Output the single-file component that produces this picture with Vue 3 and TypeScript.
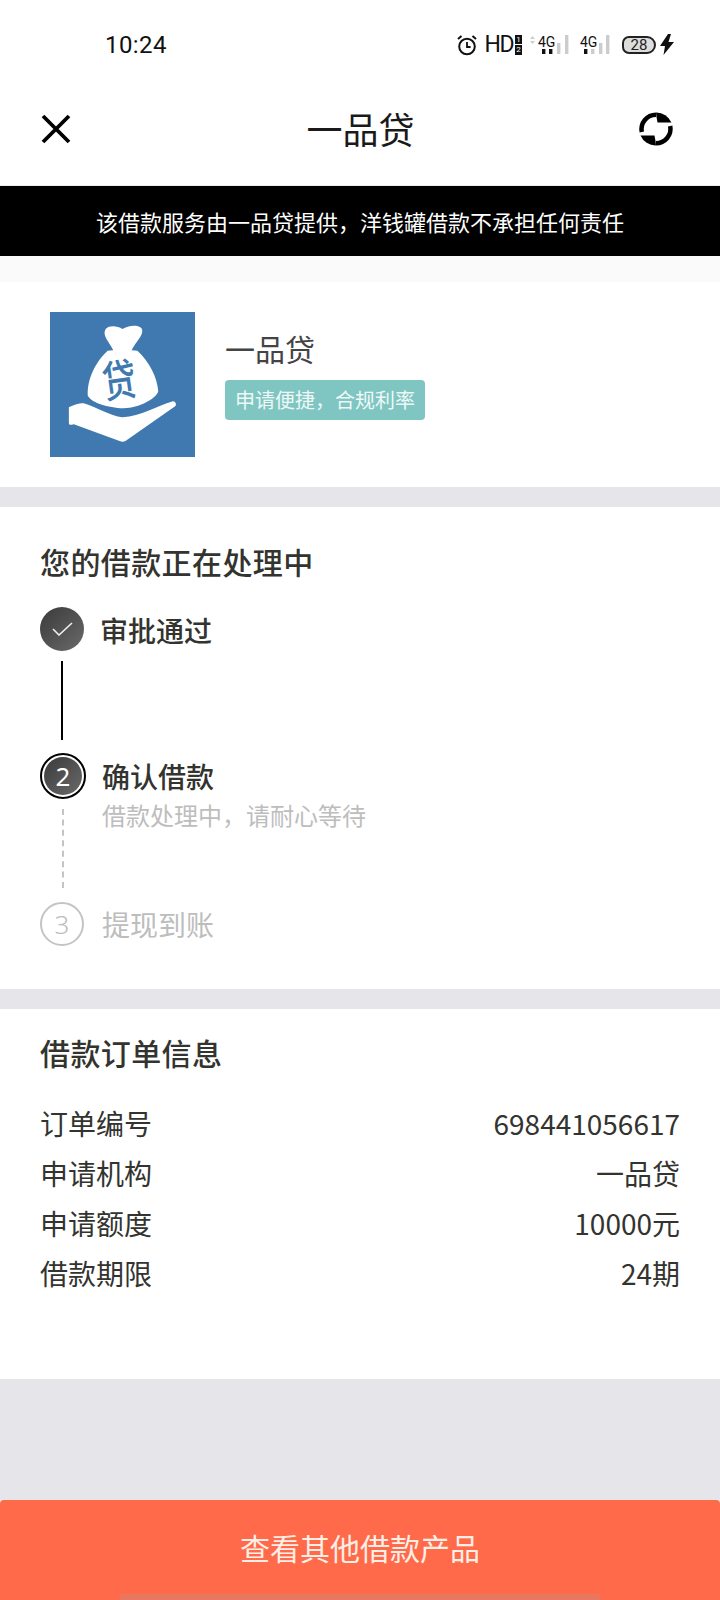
<script setup lang="ts">
type Row = { label: string; value: string }

const rows: Row[] = [
  { label: '订单编号', value: '698441056617' },
  { label: '申请机构', value: '一品贷' },
  { label: '申请额度', value: '10000元' },
  { label: '借款期限', value: '24期' },
]
</script>

<template>
  <div class="page">
    <div class="status">
      <span class="time">10:24</span>
      <div class="status-icons">
        <svg class="alarm" width="22" height="22" viewBox="0 0 22 22" fill="none" stroke="#111" stroke-width="2">
          <circle cx="11" cy="12.5" r="7.8" />
          <path d="M11 8v5h3.600" stroke-width="1.800" />
          <path d="M2 5l3.500-3M20 5l-3.500-3" stroke-width="2" />
        </svg>
        <span class="hd">HD</span>
        <span class="sim"><i>1</i><i>2</i></span>
        <svg class="signal-a" width="40" height="22" viewBox="0 0 40 22">
          <path d="M0 5l2.500-3L5 5zM0 7l2.500 3L5 7z" fill="#ccc" />
          <text x="8" y="13" class="net">4G</text>
          <rect x="12" y="15" width="3.400" height="5" fill="#111" />
          <rect x="19" y="15" width="3.400" height="5" fill="#111" />
          <rect x="27" y="9" width="3.400" height="11" fill="#ccc" />
          <rect x="35" y="1" width="3.400" height="19" fill="#ccc" />
        </svg>
        <svg class="signal-b" width="32" height="22" viewBox="0 0 32 22">
          <text x="0" y="13" class="net">4G</text>
          <rect x="4" y="15" width="3.400" height="5" fill="#111" />
          <rect x="11" y="15" width="3.400" height="5" fill="#ccc" />
          <rect x="19" y="9" width="3.400" height="11" fill="#ccc" />
          <rect x="26" y="1" width="3.400" height="19" fill="#ccc" />
        </svg>
        <span class="battery"><span>28</span></span>
        <svg class="bolt" width="14" height="21" viewBox="0 0 14 21">
          <path d="M8 0L0 12h5l-1.500 9L14 8H8.500L11 0z" fill="#111" />
        </svg>
      </div>
    </div>

    <div class="nav">
      <svg class="close" width="30" height="30" viewBox="0 0 30 30" fill="none" stroke="#000" stroke-width="3.800">
        <path d="M2 2l26 26M28 2L2 28" />
      </svg>
      <span class="nav-title">一品贷</span>
      <svg class="refresh" width="36" height="36" viewBox="0 0 36 36" fill="none" stroke="#000" stroke-width="4.500">
        <path d="M3.800 21A14.500 14.500 0 0 1 18 3.700" />
        <path d="M32.200 15A14.500 14.500 0 0 1 18 32.300" />
        <path d="M18 1.500A16.500 16.500 0 0 1 33.500 11.500H19.500L18.500 6z" fill="#000" stroke="none" />
        <path d="M18 34.500A16.500 16.500 0 0 1 2.500 24.500H16.500L17.500 30z" fill="#000" stroke="none" />
      </svg>
    </div>

    <div class="notice">该借款服务由一品贷提供，洋钱罐借款不承担任何责任</div>
    <div class="spacer"></div>

    <section class="product">
      <svg class="logo" width="145" height="145" viewBox="0 0 146 146">
        <rect width="146" height="146" fill="#3f79b0" />
        <path d="M56 17c4-4 12-3 17 0 5-3 14-5 19-1 4 6-6 14-10 23H64c-4-9-12-15-8-22z" fill="#fff" />
        <path d="M58 39q15-2 30 0c12 11 20 27 21 41-3 8-19 16-35 17-16-1-32-5-36-13-1-16 8-34 20-45z" fill="#fff" />
        <path d="M19 96c4-2 10-5 15-4 14 4 26 13 39 14 18-1 36-12 50-16 3-1 5 3 3 5L76 130c-2 1-4 1-6 0L24 113c-4 1-5 1-5-2z" fill="#fff" />
        <text transform="translate(72 85) rotate(-8) scale(.85 1.1)" text-anchor="middle" class="logo-glyph">贷</text>
      </svg>
      <div class="product-info">
        <div class="product-name">一品贷</div>
        <div class="tag">申请便捷，合规利率</div>
      </div>
    </section>

    <section class="progress">
      <h2 class="heading">您的借款正在处理中</h2>
      <div class="step done">
        <div class="track">
          <span class="dot dark">
            <svg width="21" height="14" viewBox="0 0 21 14" fill="none" stroke="#eee" stroke-width="1.600">
              <path d="M1 7l6 6L20 1" />
            </svg>
          </span>
          <span class="line solid"></span>
        </div>
        <div class="step-title">审批通过</div>
      </div>
      <div class="step current">
        <div class="track">
          <span class="ring"><span class="dot dark small">2</span></span>
          <span class="line dashed"></span>
        </div>
        <div class="step-body">
          <div class="step-title">确认借款</div>
          <div class="step-sub">借款处理中，请耐心等待</div>
        </div>
      </div>
      <div class="step todo">
        <div class="track">
          <span class="dot outline">3</span>
        </div>
        <div class="step-title muted">提现到账</div>
      </div>
    </section>

    <section class="order">
      <h2 class="heading">借款订单信息</h2>
      <div class="rows">
        <div v-for="row in rows" :key="row.label" class="row">
          <span>{{ row.label }}</span>
          <span>{{ row.value }}</span>
        </div>
      </div>
    </section>

    <div class="filler"></div>
    <div class="action">
      查看其他借款产品
      <span class="home-bar"></span>
    </div>
  </div>
</template>

<style>
html,
body {
  margin: 0;
  background: #e6e6ea;
}
</style>

<style scoped>
.page {
  position: relative;
  width: 720px;
  height: 1600px;
  overflow: hidden;
  display: flex;
  flex-direction: column;
  background: #e6e6ea;
  font-family: "Noto Sans CJK SC", "Noto Sans", sans-serif;
  color: #33332f;
}

.status {
  height: 85px;
  box-sizing: border-box;
  padding: 4px 46px 0 105px;
  display: flex;
  align-items: center;
  justify-content: space-between;
  background: #fff;
  color: #111;
}

.time {
  font-family: Roboto, sans-serif;
  font-size: 24px;
  line-height: 28px;
  letter-spacing: 0.4px;
}

.status-icons {
  display: flex;
  align-items: center;
}

.hd {
  margin-left: 6px;
  font-family: Roboto, sans-serif;
  font-size: 23px;
  line-height: 22px;
  letter-spacing: -1.5px;
}

.sim {
  margin-left: 2px;
  width: 7px;
  height: 20px;
  display: flex;
  flex-direction: column;
  gap: 1px;
}

.sim i {
  flex: 1;
  background: #111;
  color: #fff;
  font-family: Roboto, sans-serif;
  font-size: 8px;
  font-style: normal;
  line-height: 9px;
  text-align: center;
}

.signal-a {
  margin-left: 8px;
}

.signal-b {
  margin-left: 10px;
}

.net {
  font-family: Roboto, sans-serif;
  font-size: 14px;
  fill: #111;
}

.battery {
  margin-left: 10px;
  width: 34px;
  height: 18px;
  box-sizing: border-box;
  border: 2px solid #222;
  border-radius: 7px 9px 9px 7px;
  background: #ddd;
  display: flex;
  align-items: center;
  justify-content: center;
  font-family: Roboto, sans-serif;
  font-size: 15px;
  line-height: 14px;
  color: #222;
}

.bolt {
  margin-left: 4px;
}

.nav {
  height: 101px;
  box-sizing: border-box;
  padding: 0 46px 13px 41px;
  display: grid;
  grid-template-columns: 1fr auto 1fr;
  align-items: center;
  background: #fff;
  border-bottom: 1px solid #eee;
}

.refresh {
  justify-self: end;
}

.nav-title {
  margin: 0 0 2px 6px;
  font-size: 36px;
  line-height: 44px;
  color: #1a1a1a;
}

.notice {
  height: 70px;
  background: #000;
  color: #fff;
  font-size: 22px;
  line-height: 70px;
  text-align: center;
}

.spacer {
  height: 26px;
  background: #fafafa;
}

.product {
  height: 205px;
  box-sizing: border-box;
  padding: 30px 50px 0;
  display: flex;
  align-items: flex-start;
  background: #fff;
}

.logo {
  flex: none;
}

.logo-glyph {
  font-size: 40px;
  font-weight: 500;
  fill: #3f79b0;
}

.product-info {
  margin-left: 30px;
  padding-top: 16px;
}

.product-name {
  font-size: 30px;
  line-height: 40px;
  color: #444;
}

.tag {
  margin-top: 12px;
  width: 200px;
  height: 40px;
  border-radius: 4px;
  background: #7fc6c2;
  color: #eef8f7;
  font-size: 20px;
  line-height: 40px;
  text-align: center;
}

.progress {
  margin-top: 20px;
  height: 482px;
  box-sizing: border-box;
  padding: 34px 40px 0;
  background: #fff;
}

.order {
  margin-top: 20px;
  height: 370px;
  box-sizing: border-box;
  padding: 23px 40px 0;
  background: #fff;
}

.heading {
  margin: 0;
  font-size: 30px;
  font-weight: 500;
  line-height: 40px;
  letter-spacing: 0.4px;
}

.step {
  display: flex;
}

.done {
  margin-top: 26px;
  height: 146px;
}

.current {
  height: 149px;
}

.track {
  width: 46px;
  flex: none;
  display: flex;
  flex-direction: column;
  align-items: center;
}

.dot {
  width: 44px;
  height: 44px;
  box-sizing: border-box;
  border-radius: 50%;
  flex: none;
  display: flex;
  align-items: center;
  justify-content: center;
  font-family: "Noto Sans", sans-serif;
  font-size: 26px;
}

.done .dot,
.outline {
  margin-right: 2px;
}

.dark {
  background: linear-gradient(135deg, #3a3a3a 0%, #6a6a6a 100%);
  color: #fff;
}

.small {
  width: 38px;
  height: 38px;
}

.ring {
  width: 46px;
  height: 46px;
  box-sizing: border-box;
  border: 2px solid #000;
  border-radius: 50%;
  flex: none;
  display: flex;
  align-items: center;
  justify-content: center;
}

.outline {
  border: 2px solid #c4c4c4;
  color: #bdbdbd;
  font-weight: 300;
}

.line {
  width: 0;
  height: 79px;
  margin-top: 10px;
}

.solid {
  margin-right: 2px;
  border-left: 2px solid #000;
}

.dashed {
  border-left: 2px dashed #c4c4c4;
}

.step-title {
  margin-left: 16px;
  font-size: 28px;
  font-weight: 500;
  line-height: 46px;
}

.done .step-title {
  margin-left: 14px;
  line-height: 46px;
}

.muted {
  margin-left: 16px;
  font-weight: 400;
  line-height: 44px;
  color: #bdbdbd;
}

.step-body {
  display: flex;
  flex-direction: column;
}

.step-sub {
  margin: 0 0 0 16px;
  font-size: 24px;
  line-height: 32px;
  color: #bdbdbd;
}

.rows {
  margin-top: 26px;
}

.row {
  display: flex;
  justify-content: space-between;
  font-size: 28px;
  line-height: 50px;
}

.filler {
  flex: 1;
}

.action {
  position: relative;
  height: 100px;
  border-radius: 4px 4px 0 0;
  background: #ff6a4a;
  color: #fdeee6;
  font-size: 30px;
  line-height: 95px;
  text-align: center;
}

.home-bar {
  position: absolute;
  left: 120px;
  right: 120px;
  bottom: 0;
  height: 6px;
  background: #e8775f;
}
</style>
